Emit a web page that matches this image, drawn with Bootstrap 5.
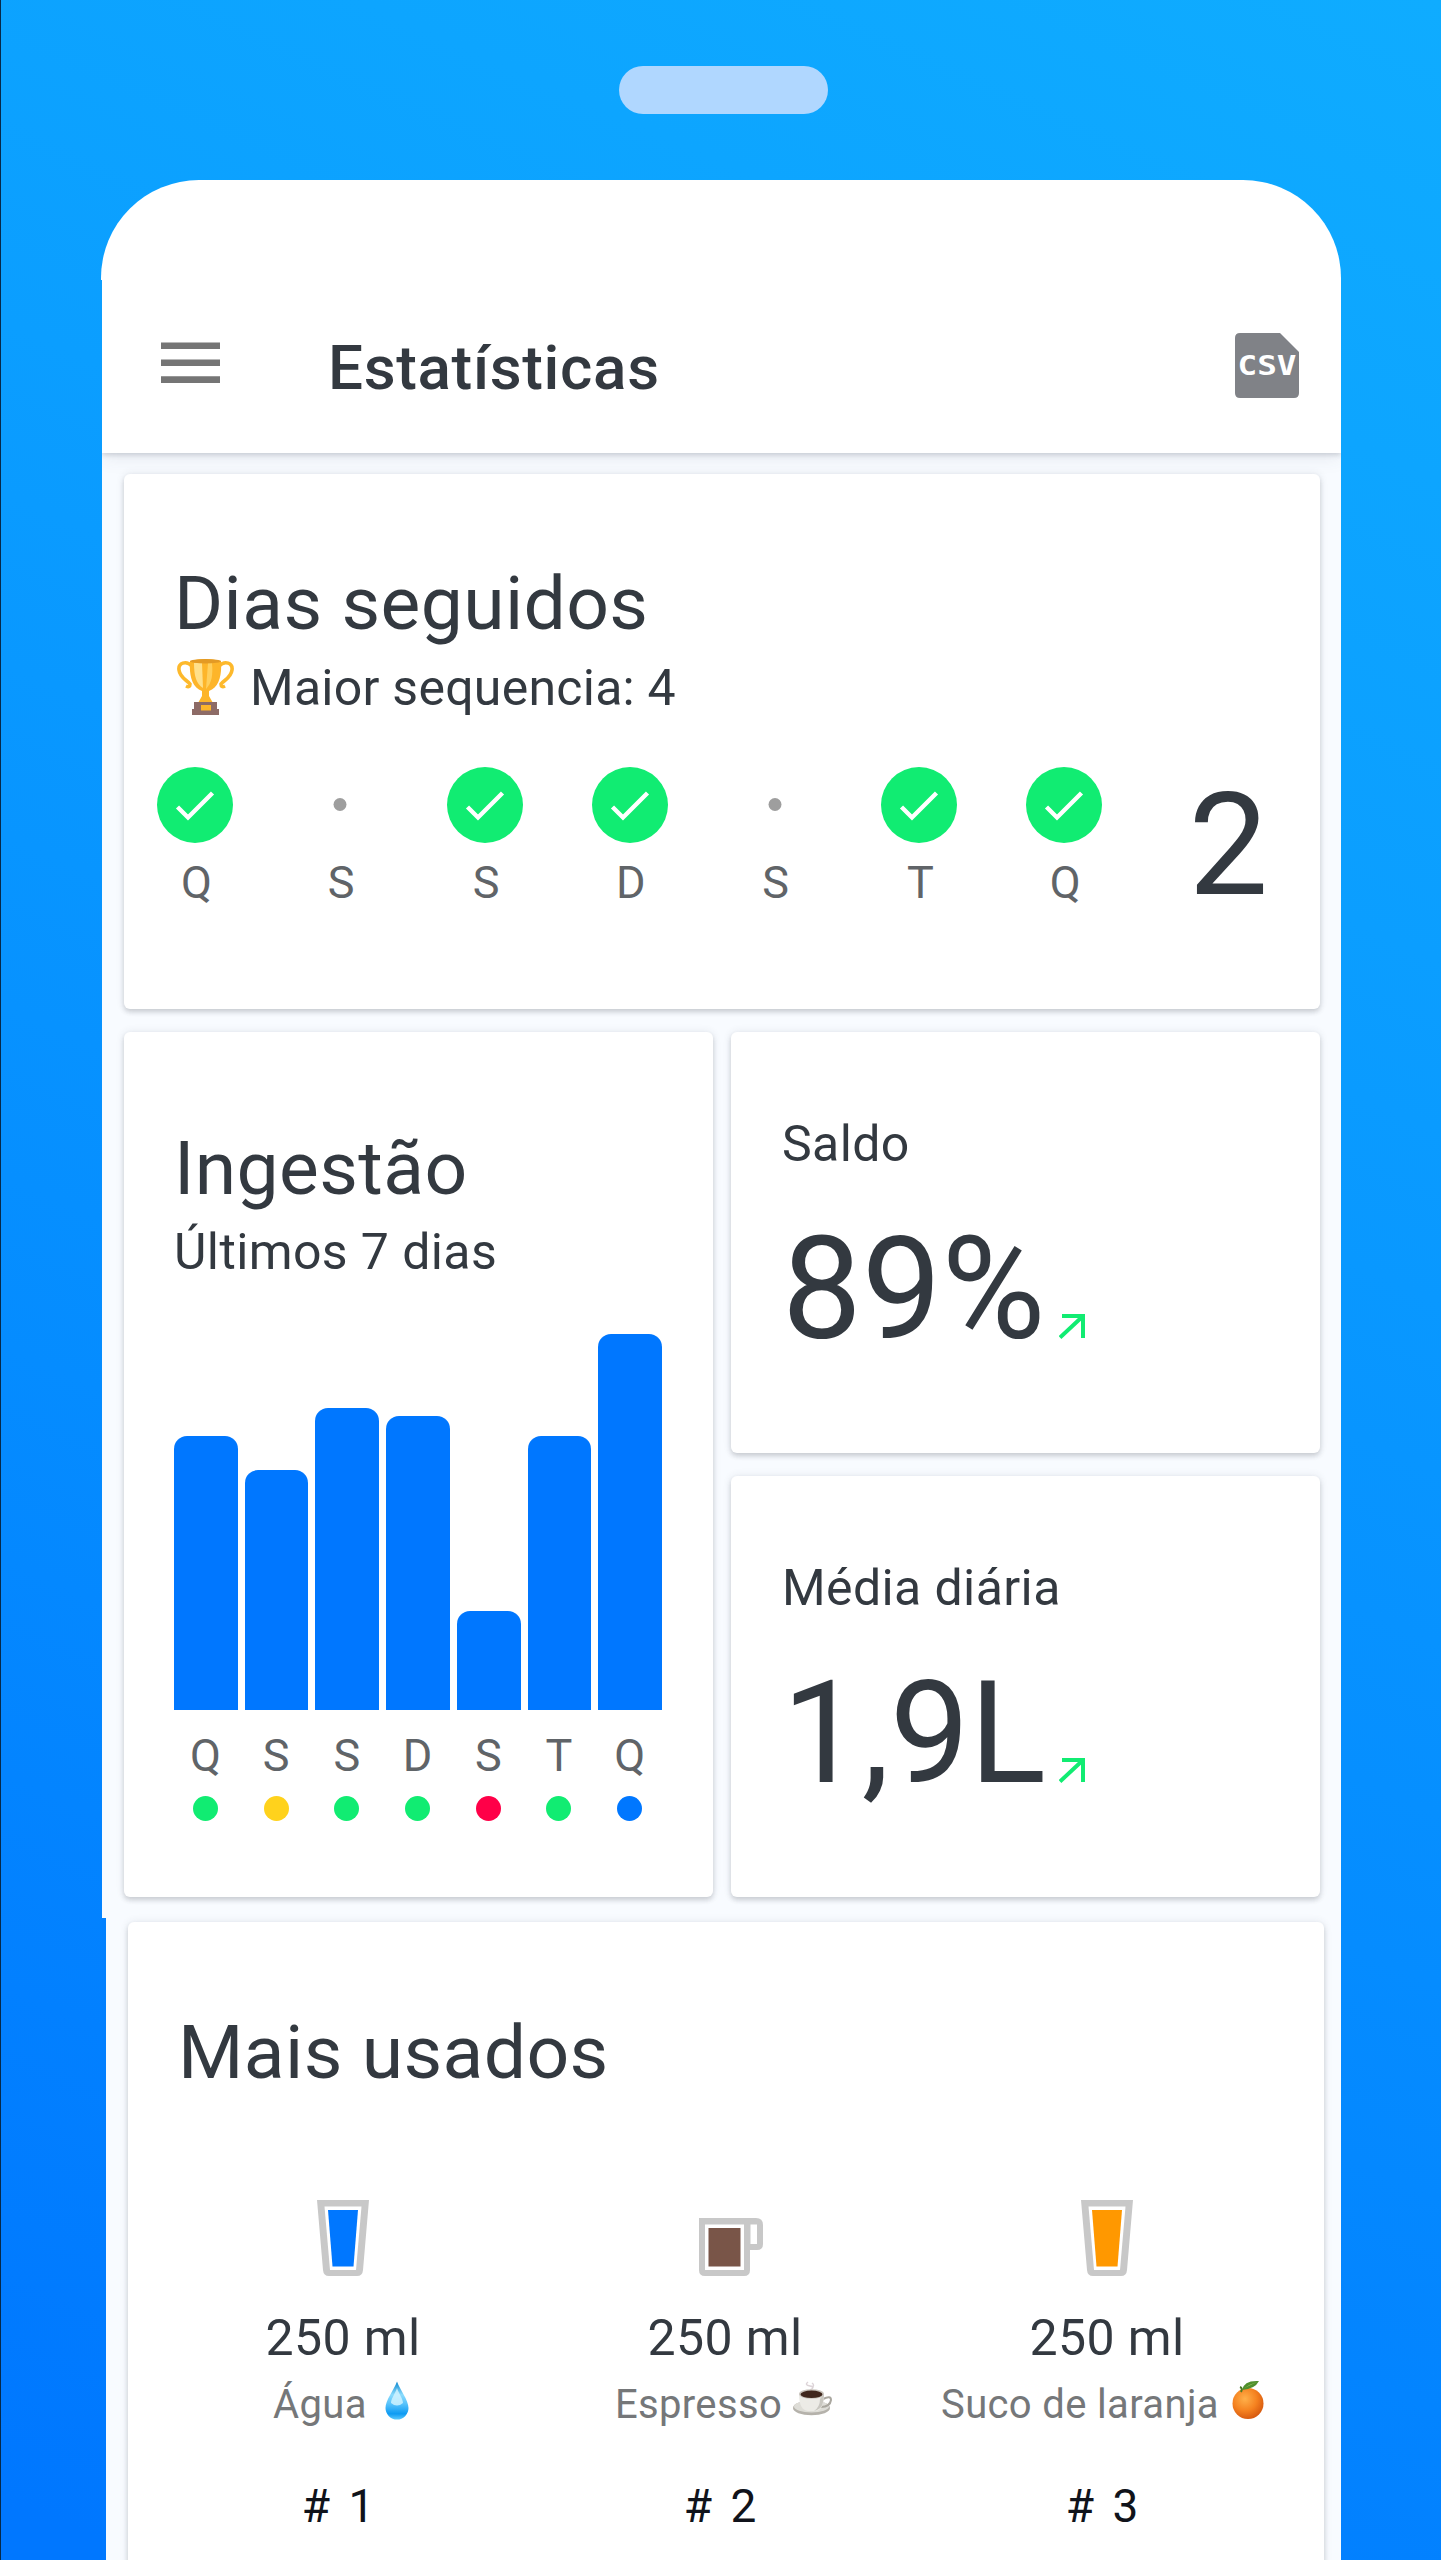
<!DOCTYPE html>
<html lang="pt-BR">
<head>
<meta charset="utf-8">
<meta name="viewport" content="width=device-width, initial-scale=1">
<title>Estatísticas</title>
<link href="https://cdn.jsdelivr.net/npm/bootstrap@5.3.0/dist/css/bootstrap.min.css" rel="stylesheet">
<style>
body{font-family:Roboto,"Liberation Sans",sans-serif;color:#333940;height:2560px;overflow:hidden;margin:0}
.stage{height:2560px;background:linear-gradient(204deg,#0facff 0%,#0b9eff 30%,#058cff 62%,#0280ff 82%,#0077ff 98%);border-left:1px solid #06294a;padding:66px 0 0 101px}
.speaker{width:209px;height:48px;margin:0 0 66px 517px;background:#b0d7ff}
.phone{width:1239px;height:2380px}
.phone-cap{height:100px;width:1240px;margin-left:-1px;background:#fff;border-radius:98px 98px 0 0}
.appbar{height:173px;background:#fff;box-shadow:0 2px 5px rgba(60,65,80,.2),0 4px 18px rgba(60,70,100,.1);clip-path:inset(0 0 -30px 0);padding:0 42px 0 59px;position:relative}
.appbar h1{font-size:62px;line-height:80px;font-weight:500;letter-spacing:.65px;margin:48px 0 0 108px}
.panel{border:0;border-radius:6px;background:#fff;box-shadow:0 3px 5px rgba(50,55,65,.2),0 0 8px rgba(50,60,80,.1)}
.ttl{font-size:75px;line-height:90px;font-weight:400;letter-spacing:.38px;margin:0}
.sub{font-size:50px;line-height:60px;letter-spacing:.4px;margin:0}
.big{font-size:142px;line-height:144px}
.screen{padding:21px 21px 0 22px;height:1465px;background:#f8fbff}
.p-streak{height:535px;padding:84px 0 0 50px}
.streak-best{margin-top:10px;letter-spacing:.25px}
.days{margin:49px 0 0 -51px}
.dcol{width:144.8px}
.tick{height:76px}
.ltr{font-size:45px;line-height:54px;color:#606468}
.days .ltr{margin:13px 0 0 2px}
.p-intake{width:589px;height:865px;padding:91px 51px 0 50px}
.bars{height:376px;gap:7px;margin-top:52px}
.bars div{flex:1;background:#07f;border-radius:13px 13px 0 0}
.intake-days{margin:19px -3px 0 -4px}
.dot{width:25px;height:25px;border-radius:50%;margin:13px auto 0}
.p-stat{width:589px;height:421px;padding:82px 50px 0 51px}
.figure-row{margin-top:44px}
.figure-row svg{margin-bottom:23px}
.bignum{width:277px}
.screen2{margin-left:4px;padding:4px 17px 0 22px;background:#f8fbff;height:642px}
.edge{background:linear-gradient(#0281ff,#0078ff);height:642px}
.p-used{height:660px;padding:85px 0 0}
.used{margin:103px 24px 0}
.used .ucol{width:382px}
.vol{margin-top:32px}
.uname{font-size:40px;line-height:50px;letter-spacing:.35px;color:#757779;margin-top:12px}
.rank{font-size:46px;line-height:60px;word-spacing:7px;color:#10131b;margin:46px 10px 0 0}
svg{display:block;flex:none}
</style>
</head>
<body>
<svg width="0" height="0" class="position-absolute"><defs>
<symbol id="ok" viewBox="0 0 76 76"><circle cx="38" cy="38" r="38" fill="#11ec72"/><path d="M20.500 40 31 50.500 55.500 26" fill="none" stroke="#fff" stroke-width="4.400"/></symbol>
<symbol id="none" viewBox="0 0 76 76"><circle cx="38" cy="37.500" r="6.500" fill="#9e9e9e"/></symbol>
<symbol id="up" viewBox="0 0 26 25"><path d="M1 23.500 23 3M3 1.900H24V24" fill="none" stroke="#11ec72" stroke-width="4"/></symbol>
</defs></svg>
<div class="stage">
  <div class="speaker rounded-pill"></div>
  <div class="phone">
    <div class="phone-cap"></div>
    <header class="appbar d-flex align-items-start">
      <svg width="59" height="42" viewBox="0 0 59 42" style="margin-top:62px"><path d="M0 3.800H59M0 20.800H59M0 37.600H59" stroke="#757575" stroke-width="6.600"/></svg>
      <h1>Estatísticas</h1>
      <svg class="ms-auto" width="64" height="65" viewBox="0 0 64 65" style="margin-top:53px"><path d="M5 0H45L64 19V60Q64 65 59 65H5Q0 65 0 60V5Q0 0 5 0Z" fill="#808287"/><text x="2.500" y="41.500" font-family="DejaVu Sans Mono" font-weight="700" font-size="26" fill="#fff" textLength="59" lengthAdjust="spacingAndGlyphs">CSV</text></svg>
    </header>
    <main class="screen">
      <section class="card panel p-streak">
        <h2 class="ttl">Dias seguidos</h2>
        <div class="sub streak-best d-flex">
          <svg width="60" height="60" viewBox="0 0 60 60" style="margin-right:16px"><g fill="none" stroke="#fdb92c" stroke-width="3.600"><path d="M18 8C12 2 4 5 5 12 6 20 13 22 16 26Q16 30 12 28M45 8C51 2 59 5 58 12 57 20 50 22 47 26Q47 30 51 28"/></g><path d="M16 3Q31-1 47 3C48 18 45 29 35 33V38L39 45H24L28 38V33C18 29 15 18 16 3Z" fill="#fdb52a"/><path d="M20 5H28L29 30C22 26 20 17 20 5Z" fill="#ffe08a"/><path d="M34 5H38C39 16 38 25 32 31Z" fill="#ffcf5c"/><ellipse cx="31.500" cy="3.300" rx="15.500" ry="2.200" fill="#e39a25"/><path d="M20 44H43V51H45V57H18V51H20Z" fill="#8d6b66"/><rect x="27" y="47" width="10" height="5.500" fill="#fdb52a"/></svg>
          <span>Maior sequencia: 4</span></div>
        <div class="days d-flex text-center">
          <div class="dcol"><svg class="tick mx-auto" width="76"><use href="#ok"/></svg><div class="ltr">Q</div></div>
          <div class="dcol"><svg class="tick mx-auto" width="76"><use href="#none"/></svg><div class="ltr">S</div></div>
          <div class="dcol"><svg class="tick mx-auto" width="76"><use href="#ok"/></svg><div class="ltr">S</div></div>
          <div class="dcol"><svg class="tick mx-auto" width="76"><use href="#ok"/></svg><div class="ltr">D</div></div>
          <div class="dcol"><svg class="tick mx-auto" width="76"><use href="#none"/></svg><div class="ltr">S</div></div>
          <div class="dcol"><svg class="tick mx-auto" width="76"><use href="#ok"/></svg><div class="ltr">T</div></div>
          <div class="dcol"><svg class="tick mx-auto" width="76"><use href="#ok"/></svg><div class="ltr">Q</div></div>
          <div class="big flex-grow-1" style="margin-top:7px">2</div>
        </div>
      </section>
      <div class="d-flex justify-content-between" style="margin-top:23px">
        <section class="card panel p-intake">
          <h2 class="ttl">Ingestão</h2>
          <div class="sub" style="margin-top:9px">Últimos 7 dias</div>
          <div class="bars d-flex align-items-end">
            <div style="height:274px"></div><div style="height:240px"></div><div style="height:302px"></div><div style="height:294px"></div><div style="height:99px"></div><div style="height:274px"></div><div style="height:376px"></div>
          </div>
          <div class="intake-days d-flex text-center">
            <div class="col ltr">Q<div class="dot" style="background:#11ec72"></div></div>
            <div class="col ltr">S<div class="dot" style="background:#ffd21c"></div></div>
            <div class="col ltr">S<div class="dot" style="background:#11ec72"></div></div>
            <div class="col ltr">D<div class="dot" style="background:#11ec72"></div></div>
            <div class="col ltr">S<div class="dot" style="background:#ff0048"></div></div>
            <div class="col ltr">T<div class="dot" style="background:#11ec72"></div></div>
            <div class="col ltr">Q<div class="dot" style="background:#07f"></div></div>
          </div>
        </section>
        <div class="d-flex flex-column" style="gap:23px">
          <section class="card panel p-stat">
            <div class="sub">Saldo</div>
            <div class="figure-row d-flex align-items-end"><div class="big bignum">89%</div><svg width="26" height="25"><use href="#up"/></svg></div>
          </section>
          <section class="card panel p-stat">
            <div class="sub">Média diária</div>
            <div class="figure-row d-flex align-items-end"><div class="big bignum">1,9L</div><svg width="26" height="25"><use href="#up"/></svg></div>
          </section>
        </div>
      </div>
    </main>
    <div class="edge"><div class="screen2">
      <section class="card panel p-used">
        <h2 class="ttl" style="margin-left:50px">Mais usados</h2>
        <div class="used d-flex text-center">
          <div class="ucol">
            <svg class="mx-auto" width="52" height="76" viewBox="0 0 52 76"><path d="M0 0H52L46 70Q45.500 76 40 76H12Q6.500 76 6 70Z" fill="#c8c8c8"/><path d="M7.500 6.500H44.500L39 70H13Z" fill="#fff"/><path d="M11 10H41L36.500 66.500H15.500Z" fill="#07f"/></svg>
            <div class="sub vol">250 ml</div>
            <div class="uname d-flex justify-content-center"><span>Água</span><svg width="24" height="40" viewBox="0 0 24 40" style="margin:1px 4px 0 18px"><defs><linearGradient id="dr" x2="0" y2="1"><stop stop-color="#0b86cf"/><stop offset=".35" stop-color="#8bdcfd"/><stop offset=".6" stop-color="#55c1fb"/><stop offset=".85" stop-color="#0e9bf3"/><stop offset="1" stop-color="#5cc9fc"/></linearGradient></defs><path d="M12 .500C15 9 23.500 19 23.500 27A11.500 11.500 0 0 1 .500 27C.500 19 9 9 12 .500Z" fill="url(#dr)"/><path d="M12 7C14 13 18 18 18 22Q12 27 6 22C6 18 10 13 12 7Z" fill="#d6f5ff" opacity=".8"/></svg></div>
            <div class="rank"># 1</div>
          </div>
          <div class="ucol">
            <svg class="mx-auto" width="78" height="76" viewBox="0 0 78 76"><path d="M13 18H70Q77 18 77 25V44Q77 50 71 50H64V70Q64 76 58 76H19Q13 76 13 70Z" fill="#c8c8c8"/><path d="M19 24.500H58V70H19ZM64.500 24.500H71V44H64.500Z" fill="#fff"/><path d="M22.500 28H54.500V66.500H22.500Z" fill="#795548"/></svg>
            <div class="sub vol">250 ml</div>
            <div class="uname d-flex justify-content-center"><span>Espresso</span><svg width="39" height="35" viewBox="0 0 39 35" style="margin:1px 3px 0 11px"><path d="M15 1q-4 3 2 4t0 4M19 2q3 2 0 5" fill="none" stroke="#ddd4d8" stroke-width="1.500"/><ellipse cx="18.500" cy="27" rx="18.500" ry="7.300" fill="#b5b2ab"/><ellipse cx="18.500" cy="25.500" rx="17.500" ry="6" fill="#deddd7"/><path d="M30 18Q38 14 38 19 37 26 28 26" fill="none" stroke="#aaa79f" stroke-width="2"/><path d="M6 13Q6 29 15 30H23Q31 29 31 13Z" fill="#ecebe6"/><path d="M24 29Q31 27 31 13L27 18Q27 26 21 30Z" fill="#c9c7c0"/><ellipse cx="18.500" cy="13" rx="12.500" ry="4.800" fill="#c9c4bd"/><ellipse cx="18.500" cy="13.300" rx="11" ry="3.700" fill="#40271d"/></svg></div>
            <div class="rank"># 2</div>
          </div>
          <div class="ucol">
            <svg class="mx-auto" width="52" height="76" viewBox="0 0 52 76"><path d="M0 0H52L46 70Q45.500 76 40 76H12Q6.500 76 6 70Z" fill="#c8c8c8"/><path d="M7.500 6.500H44.500L39 70H13Z" fill="#fff"/><path d="M11 10H41L36.500 66.500H15.500Z" fill="#ff9800"/></svg>
            <div class="sub vol">250 ml</div>
            <div class="uname d-flex justify-content-center"><span>Suco de laranja</span><svg width="32" height="40" viewBox="0 0 32 40" style="margin:0 9px 0 13px"><defs><radialGradient id="og" cx=".4" cy=".35" r=".7"><stop stop-color="#ffb04a"/><stop offset=".55" stop-color="#f58220"/><stop offset="1" stop-color="#d4550d"/></radialGradient></defs><ellipse cx="16" cy="23.500" rx="15.500" ry="15.500" fill="url(#og)"/><path d="M9 12Q11 8 8 7" fill="none" stroke="#4a7a22" stroke-width="2"/><path d="M10 10Q12 0 27 1 23 9 10 10Z" fill="#4f8f2c"/><path d="M11 9Q18 4 26 1.500 20 4 11 9Z" fill="#9ac665"/></svg></div>
            <div class="rank"># 3</div>
          </div>
        </div>
      </section>
    </div></div>
  </div>
</div>
<script src="https://cdn.jsdelivr.net/npm/bootstrap@5.3.0/dist/js/bootstrap.bundle.min.js"></script>
</body>
</html>
